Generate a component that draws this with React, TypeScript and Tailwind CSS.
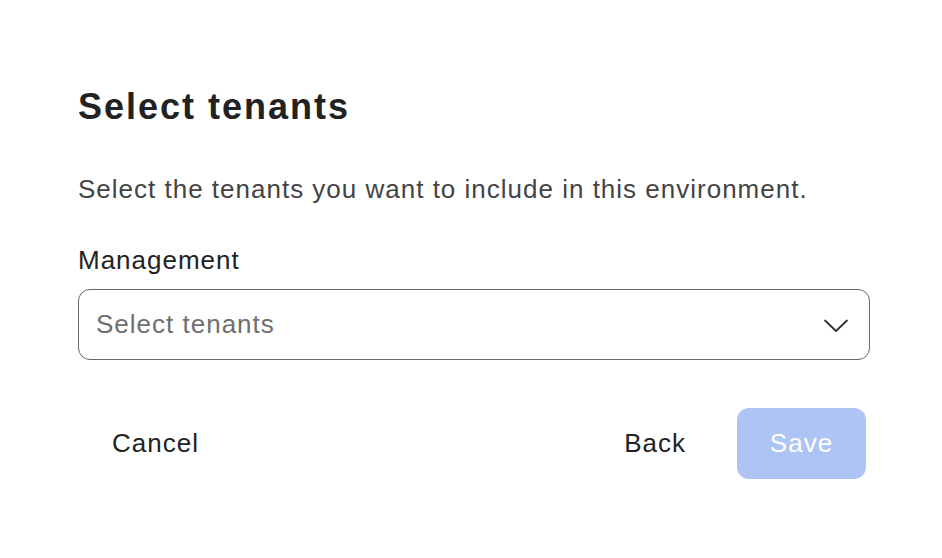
export default function App() {
  return (
    <div className="min-h-screen bg-white font-['Liberation_Sans',Arial,sans-serif]">
      <div className="px-[78px] pt-[83px]">
        <h1 className="text-[36px] leading-[48px] font-bold tracking-[2px] text-[#222222]">Select tenants</h1>
        <p className="mt-[42px] text-[26px] leading-[32px] tracking-[1px] text-[#444444]">
          Select the tenants you want to include in this environment.
        </p>
        <label className="block mt-[39px] text-[26px] leading-[32px] tracking-[1px] text-[#222222]">
          Management
        </label>
        <button
          type="button"
          className="mt-[13px] flex h-[71px] w-[792px] items-center justify-between rounded-[12px] border-[1.5px] border-[#666666] pl-[17px] pr-[20px] text-left"
        >
          <span className="text-[26px] tracking-[1px] text-[#6f6f6f]">Select tenants</span>
          <svg width="26" height="16" viewBox="0 0 26 16" fill="none" className="mt-[2px]">
            <path d="M2 2.5L13 13L24 2.5" stroke="#333333" strokeWidth="1.8" strokeLinecap="round" strokeLinejoin="round" />
          </svg>
        </button>
        <div className="mt-[48px] flex w-[788px] items-center justify-between">
          <button type="button" className="h-[71px] rounded-[12px] px-[34px] text-[26px] tracking-[1px] text-[#222222]">
            Cancel
          </button>
          <div className="flex items-center gap-[17px]">
            <button type="button" className="h-[71px] rounded-[12px] px-[34px] text-[26px] tracking-[1px] text-[#222222]">
              Back
            </button>
            <button
              type="button"
              disabled
              className="h-[71px] w-[129px] rounded-[12px] bg-[#adc4f4] text-[26px] tracking-[1px] text-white"
            >
              Save
            </button>
          </div>
        </div>
      </div>
    </div>
  );
}
